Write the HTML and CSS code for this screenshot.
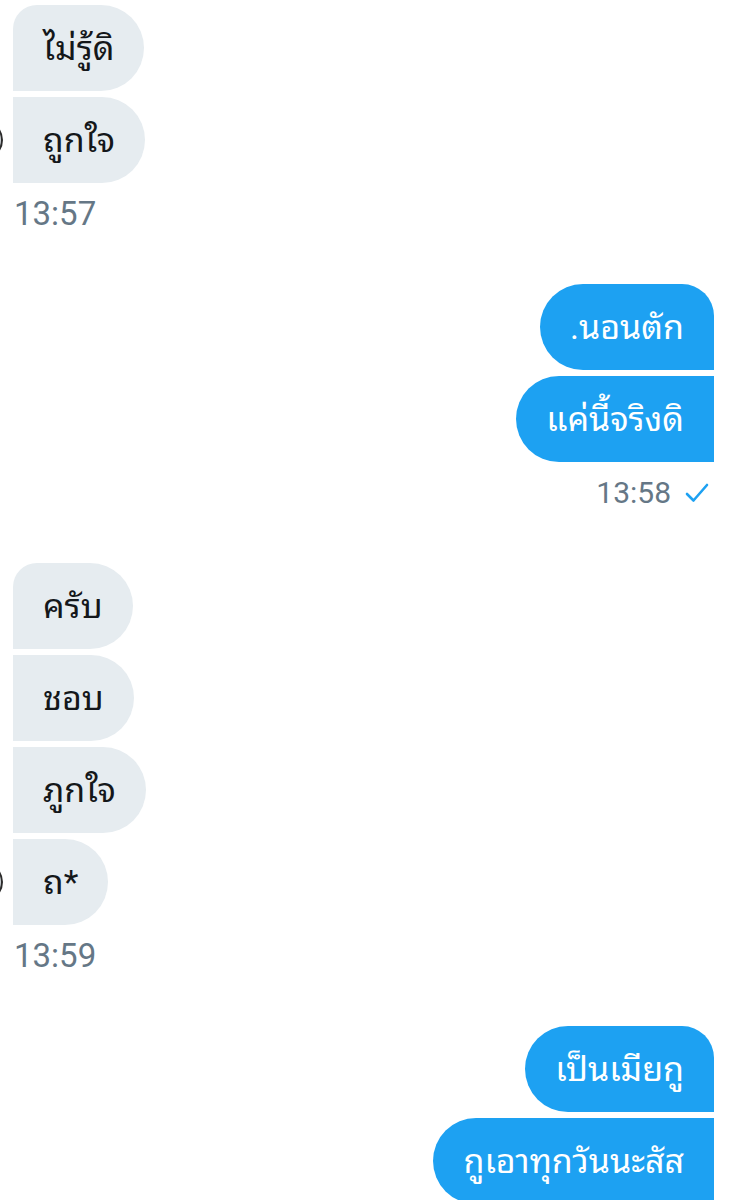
FILE: index.html
```html
<!DOCTYPE html>
<html lang="th">
<head>
<meta charset="utf-8">
<title>Messages</title>
<link rel="stylesheet" href="styles.css">
</head>
<body>
<main class="chat">
  <section class="group in">
    <div class="row"><div class="bubble first">ไม่รู้ดิ</div></div>
    <div class="row last"><span class="avatar"></span><div class="bubble">ถูกใจ</div></div>
    <div class="time">13:57</div>
  </section>

  <section class="group out">
    <div class="row"><div class="bubble first">.นอนตัก</div></div>
    <div class="row"><div class="bubble">แค่นี้จริงดิ</div></div>
    <div class="time">13:58 <svg class="check" viewBox="0 0 24 20" width="24" height="20"><polyline points="2,11 8.5,17.5 22,2" fill="none" stroke="#1DA1F2" stroke-width="2.6" stroke-linecap="round" stroke-linejoin="round"/></svg></div>
  </section>

  <section class="group in">
    <div class="row"><div class="bubble first">ครับ</div></div>
    <div class="row"><div class="bubble">ชอบ</div></div>
    <div class="row"><div class="bubble">ภูกใจ</div></div>
    <div class="row last"><span class="avatar"></span><div class="bubble">ถ*</div></div>
    <div class="time">13:59</div>
  </section>

  <section class="group out">
    <div class="row"><div class="bubble first">เป็นเมียกู</div></div>
    <div class="row"><div class="bubble">กูเอาทุกวันนะสัส</div></div>
  </section>
</main>
</body>
</html>
```

FILE: styles.css
```css
html, body {
  margin: 0;
  padding: 0;
  background: #ffffff;
}

body {
  font-family: Roboto, "Noto Sans Thai Looped", "Noto Sans Thai UI", "Noto Sans Thai", "Noto Sans", "DejaVu Sans", sans-serif;
  overflow: hidden;
}

.chat {
  width: 743px;
  padding-top: 5px;
  display: flex;
  flex-direction: column;
  gap: 52px;
}

.group {
  display: flex;
  flex-direction: column;
  gap: 6px;
}

.row {
  display: flex;
  align-items: center;
}

.group.in .row {
  padding-left: 13px;
}

.group.out .row {
  justify-content: flex-end;
  padding-right: 29px;
}

.bubble {
  height: 86px;
  box-sizing: border-box;
  display: flex;
  align-items: center;
  padding: 0 30px;
  font-size: 34px;
  line-height: 1;
  white-space: nowrap;
}

.group.in .bubble {
  background: #E6ECF0;
  color: #14171A;
  border-radius: 0 43px 43px 0;
}

.group.in .bubble.first {
  border-radius: 24px 43px 43px 0;
}

.group.out .bubble {
  background: #1DA1F2;
  color: #ffffff;
  border-radius: 43px 0 0 43px;
}

.group.out .bubble.first {
  border-radius: 43px 32px 0 43px;
}

.group.in .row.last {
  padding-left: 0;
}

.avatar {
  width: 40px;
  height: 40px;
  border-radius: 50%;
  background: #cfd4d8;
  border: 2px solid #2b2b2b;
  box-sizing: border-box;
  margin-left: -37px;
  margin-right: 10px;
  flex: none;
}

.time {
  margin-top: 7px;
  font-size: 30px;
  line-height: 36px;
  color: #657786;
  display: flex;
  align-items: center;
}

.group.in .time {
  padding-left: 14px;
  font-size: 33px;
}

.group.out .time {
  justify-content: flex-end;
  padding-right: 34px;
  gap: 14px;
}

.check {
  display: block;
}
```
